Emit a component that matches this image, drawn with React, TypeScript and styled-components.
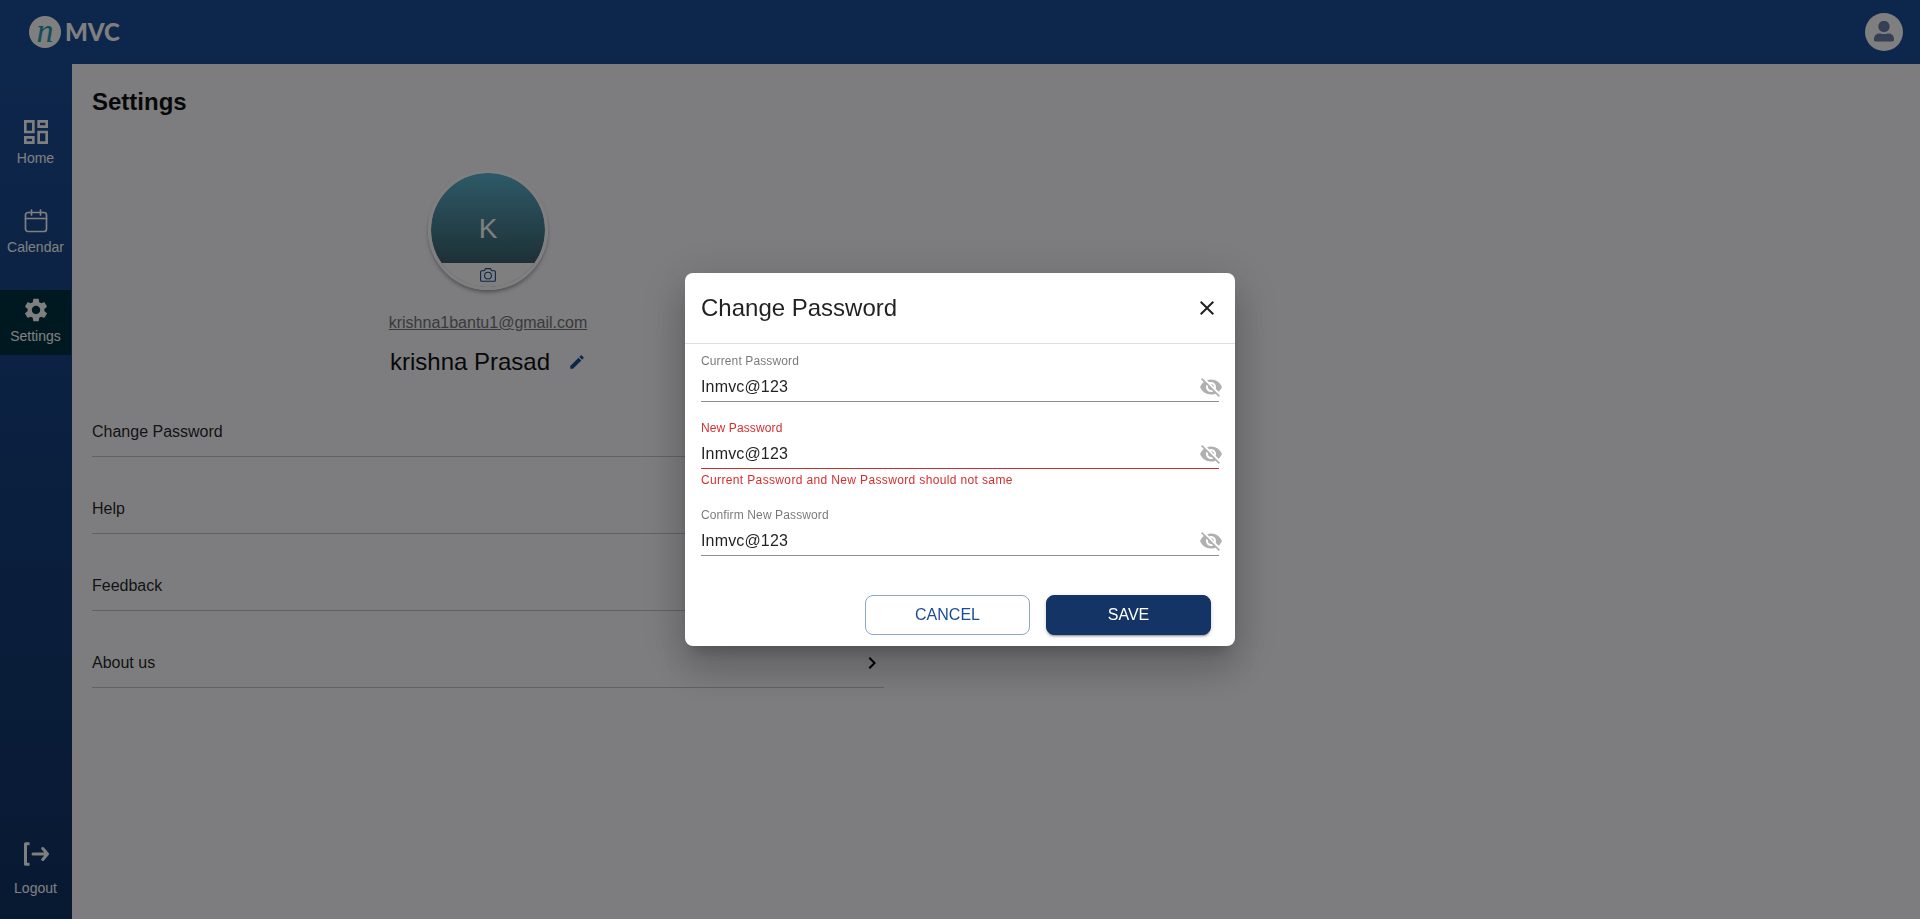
import React, { useState } from 'react';
import styled, { createGlobalStyle, css } from 'styled-components';
import {
  MdOutlineDashboard,
  MdSettings,
  MdEdit,
  MdChevronRight,
  MdClose,
  MdVisibilityOff,
} from 'react-icons/md';

const GlobalStyle = createGlobalStyle`
  *, *::before, *::after { box-sizing: border-box; }
  body {
    margin: 0;
    font-family: "Liberation Sans", Arial, sans-serif;
    font-size: 16px;
    line-height: 24px;
    color: rgba(0, 0, 0, 0.87);
    background: #fafafe;
  }
  h1, h2, p { margin: 0; }
  button, input { font: inherit; color: inherit; }
  svg { display: block; flex: none; }
`;

const Page = styled.div`
  display: flex;
  flex-direction: column;
  min-height: 100vh;
`;

const TopBar = styled.header`
  display: flex;
  align-items: center;
  justify-content: space-between;
  height: 64px;
  padding: 0 17px 0 29px;
  background: #1b4d97;
`;

const Logo = styled.a`
  display: flex;
  align-items: center;
  gap: 4px;
  color: #fff;
  text-decoration: none;
`;

const LogoMark = styled.span`
  display: flex;
  align-items: center;
  justify-content: center;
  width: 32px;
  height: 32px;
  padding-bottom: 2px;
  border-radius: 50%;
  background: #fff;
  color: #1f9db5;
  font: italic 34px/16px "Liberation Serif", "Times New Roman", serif;
`;

const LogoName = styled.span`
  font: 900 24px/32px Lato, sans-serif;
`;

const ProfileButton = styled.button`
  display: flex;
  align-items: center;
  justify-content: center;
  width: 38px;
  height: 38px;
  padding: 0;
  border: 0;
  border-radius: 50%;
  background: #fff;
  color: #6c80a8;
`;

const Body = styled.div`
  display: flex;
  flex: 1;
`;

const Sidebar = styled.nav`
  display: flex;
  flex-direction: column;
  gap: 24px;
  width: 72px;
  padding: 48px 0 16px;
  background: linear-gradient(#1b4d97, #103264);
`;

const NavItem = styled.a<{ $active?: boolean; $bottom?: boolean }>`
  display: flex;
  flex-direction: column;
  align-items: center;
  justify-content: space-between;
  width: 71px;
  height: 65px;
  padding: 4px 0 9px;
  font-size: 14px;
  line-height: 20px;
  color: #fff;
  text-decoration: none;
  background: ${(p) => (p.$active ? '#003340' : 'transparent')};
  ${(p) =>
    p.$bottom &&
    css`
      height: 66px;
      margin-top: auto;
      padding: 1px 0 5px;
    `}
`;

const NavIcon = styled.span`
  display: flex;
  align-items: center;
  justify-content: center;
  height: 32px;
`;

const Main = styled.main`
  display: grid;
  grid-template-columns: 11fr 14fr;
  align-content: start;
  flex: 1;
  padding: 20px 28px 20px 20px;
`;

const Panel = styled.section`
  display: flex;
  flex-direction: column;
`;

const PageTitle = styled.h1`
  font-size: 24px;
  line-height: 36px;
  color: #111;
`;

const Profile = styled.div`
  display: flex;
  flex-direction: column;
  align-items: center;
  padding-top: 50px;
`;

const Avatar = styled.div`
  display: flex;
  flex-direction: column;
  width: 120px;
  height: 120px;
  border: 3px solid #fff;
  border-radius: 50%;
  overflow: hidden;
  background: linear-gradient(#5cb4d0, #3a606c 80%) padding-box;
  box-shadow: 0 3px 4px -1px rgba(0, 0, 0, 0.4);
`;

const Initial = styled.div`
  display: flex;
  align-items: flex-end;
  justify-content: center;
  height: 90px;
  padding-bottom: 16px;
  font-size: 28px;
  line-height: 36px;
  color: #fff;
`;

const PhotoButton = styled.button`
  display: flex;
  align-items: flex-start;
  justify-content: center;
  flex: 1;
  padding: 4px 0 0;
  border: 0;
  background: #fff;
  color: #1b4d97;
`;

const Email = styled.a`
  margin-top: 21px;
  color: #757577;
`;

const NameRow = styled.div`
  display: flex;
  align-items: center;
  gap: 18px;
  margin-top: 9px;
  font-size: 24px;
  line-height: 36px;
  color: #111;
`;

const PlainButton = styled.button`
  display: flex;
  padding: 0;
  border: 0;
  background: none;
`;

const EditButton = styled(PlainButton)`
  color: #1b4d97;
`;

const Links = styled.div`
  display: flex;
  flex-direction: column;
`;

const LinkRow = styled.button`
  display: flex;
  align-items: flex-end;
  justify-content: space-between;
  height: 77px;
  padding: 0 0 12px;
  border: 0;
  border-bottom: 1px solid #c4c4c6;
  background: none;
  text-align: left;

  svg { color: #000; }
`;

const Backdrop = styled.div`
  position: fixed;
  inset: 0;
  display: flex;
  align-items: center;
  justify-content: center;
  background: rgba(0, 0, 0, 0.5);
`;

const Dialog = styled.form`
  width: 550px;
  max-width: calc(100% - 64px);
  border-radius: 8px;
  background: #fff;
  box-shadow:
    0 11px 15px -7px rgba(0, 0, 0, 0.2),
    0 24px 38px 3px rgba(0, 0, 0, 0.14),
    0 9px 46px 8px rgba(0, 0, 0, 0.12);
`;

const DialogHeader = styled.header`
  display: flex;
  align-items: center;
  justify-content: space-between;
  height: 71px;
  padding: 0 16px;
  border-bottom: 1px solid #dfdfdf;
`;

const DialogTitle = styled.h2`
  font-size: 24px;
  line-height: 32px;
  font-weight: 400;
`;

const Fields = styled.div`
  display: flex;
  flex-direction: column;
  gap: 17px;
  padding: 8px 16px 39px;
`;

const FieldBox = styled.div`
  display: flex;
  flex-direction: column;
`;

const FieldLabel = styled.label<{ $error?: boolean }>`
  font-size: 12px;
  line-height: 18px;
  letter-spacing: 0.01em;
  color: ${(p) => (p.$error ? '#d32f2f' : 'rgba(0, 0, 0, 0.54)')};
`;

const InputRow = styled.div<{ $error?: boolean }>`
  display: flex;
  align-items: center;
  height: 32px;
  padding-top: 2px;
  border-bottom: 1px solid ${(p) => (p.$error ? '#d32f2f' : '#8c8c8c')};
`;

const TextInput = styled.input`
  flex: 1;
  min-width: 0;
  height: 24px;
  padding: 0;
  border: 0;
  outline: 0;
  background: none;
  letter-spacing: 0.01em;
`;

const EyeButton = styled(PlainButton)`
  margin-right: -4px;
  color: #b0b0b0;
`;

const ErrorText = styled.p`
  margin-top: 2px;
  font-size: 12px;
  line-height: 18px;
  letter-spacing: 0.03em;
  color: #d32f2f;
`;

const Actions = styled.div`
  display: flex;
  justify-content: flex-end;
  gap: 16px;
  padding: 0 24px 11px;
`;

const ActionButton = styled.button<{ $primary?: boolean }>`
  width: 165px;
  height: 40px;
  padding: 0;
  border: 1px solid ${(p) => (p.$primary ? '#133464' : '#8da6cb')};
  border-radius: 8px;
  color: ${(p) => (p.$primary ? '#fff' : '#1b4d97')};
  background: ${(p) => (p.$primary ? '#133464' : '#fff')};
  box-shadow: ${(p) =>
    p.$primary
      ? '0 3px 1px -2px rgba(0,0,0,.2), 0 2px 2px rgba(0,0,0,.14), 0 1px 5px rgba(0,0,0,.12)'
      : 'none'};
`;

const CalendarIcon = () => (
  <svg width="24" height="24" viewBox="0 0 24 24" fill="none" stroke="currentColor" strokeWidth="1.7" strokeLinecap="round">
    <rect x="1.500" y="3.500" width="21" height="19" rx="2.500" />
    <path d="M1.500 9.500h21M7.500 1v5M16.500 1v5" />
  </svg>
);

const LogoutIcon = () => (
  <svg width="26" height="24" viewBox="0 0 26 24" fill="none" stroke="currentColor" strokeWidth="3">
    <path d="M6.500 1.700H2.500v20.600h4" strokeLinejoin="round" />
    <path d="M10 12h14M19.800 6.500l4.700 5.500-4.700 5.500" strokeLinecap="round" strokeLinejoin="round" />
  </svg>
);

const CameraIcon = () => (
  <svg width="16" height="16" viewBox="0 0 16 16" fill="none" stroke="currentColor" strokeWidth="1.100">
    <path d="M1.600 3.800h2.600L5.600 1.600h4.800l1.400 2.200h2.600a1 1 0 0 1 1 1v8.400a1 1 0 0 1-1 1H1.600a1 1 0 0 1-1-1V4.800a1 1 0 0 1 1-1z" />
    <circle cx="8" cy="8.600" r="3.400" />
  </svg>
);

const PersonIcon = () => (
  <svg width="22" height="22" viewBox="0 0 22 22" fill="currentColor">
    <circle cx="11" cy="5.500" r="5.700" />
    <path d="M1 18.100c0-3.400 2.200-5.600 5.200-5.600 1.400 0 2.600.6 4.800.6s3.400-.6 4.800-.6c3 0 5.200 2.200 5.200 5.600v1c0 .8-.6 1.400-1.400 1.400H2.400c-.8 0-1.400-.6-1.400-1.400z" />
  </svg>
);

interface FieldProps {
  id: string;
  label: string;
  value: string;
  error?: string;
  onChange: (value: string) => void;
}

const PasswordField = ({ id, label, value, error, onChange }: FieldProps) => (
  <FieldBox>
    <FieldLabel htmlFor={id} $error={!!error}>{label}</FieldLabel>
    <InputRow $error={!!error}>
      <TextInput
        id={id}
        type="text"
        value={value}
        aria-invalid={!!error}
        onChange={(e) => onChange(e.target.value)}
      />
      <EyeButton type="button" aria-label={`Hide ${label}`}>
        <MdVisibilityOff size={24} />
      </EyeButton>
    </InputRow>
    {error && <ErrorText role="alert">{error}</ErrorText>}
  </FieldBox>
);

const links = ['Change Password', 'Help', 'Feedback', 'About us'];

export default function App() {
  const [current, setCurrent] = useState('Inmvc@123');
  const [next, setNext] = useState('Inmvc@123');
  const [confirm, setConfirm] = useState('Inmvc@123');
  const error = current === next ? 'Current Password and New Password should not same' : undefined;

  return (
    <>
      <GlobalStyle />
      <Page>
        <TopBar>
          <Logo href="#">
            <LogoMark>n</LogoMark>
            <LogoName>MVC</LogoName>
          </Logo>
          <ProfileButton type="button" aria-label="Profile"><PersonIcon /></ProfileButton>
        </TopBar>
        <Body>
          <Sidebar>
            <NavItem href="#home"><NavIcon><MdOutlineDashboard size={32} /></NavIcon>Home</NavItem>
            <NavItem href="#calendar"><NavIcon><CalendarIcon /></NavIcon>Calendar</NavItem>
            <NavItem href="#settings" $active><NavIcon><MdSettings size={28} /></NavIcon>Settings</NavItem>
            <NavItem href="#logout" $bottom><NavIcon><LogoutIcon /></NavIcon>Logout</NavItem>
          </Sidebar>
          <Main>
            <Panel>
              <PageTitle>Settings</PageTitle>
              <Profile>
                <Avatar>
                  <Initial>K</Initial>
                  <PhotoButton type="button" aria-label="Change photo"><CameraIcon /></PhotoButton>
                </Avatar>
                <Email href="#email">krishna1bantu1@gmail.com</Email>
                <NameRow>
                  krishna Prasad
                  <EditButton type="button" aria-label="Edit name"><MdEdit size={18} /></EditButton>
                </NameRow>
              </Profile>
              <Links>
                {links.map((text) => (
                  <LinkRow key={text} type="button">
                    {text}
                    <MdChevronRight size={24} />
                  </LinkRow>
                ))}
              </Links>
            </Panel>
          </Main>
        </Body>
      </Page>
      <Backdrop>
        <Dialog role="dialog" aria-modal="true" aria-labelledby="dialog-title" onSubmit={(e) => e.preventDefault()}>
          <DialogHeader>
            <DialogTitle id="dialog-title">Change Password</DialogTitle>
            <PlainButton type="button" aria-label="Close"><MdClose size={24} /></PlainButton>
          </DialogHeader>
          <Fields>
            <PasswordField id="current" label="Current Password" value={current} onChange={setCurrent} />
            <PasswordField id="new" label="New Password" value={next} error={error} onChange={setNext} />
            <PasswordField id="confirm" label="Confirm New Password" value={confirm} onChange={setConfirm} />
          </Fields>
          <Actions>
            <ActionButton type="button">CANCEL</ActionButton>
            <ActionButton type="submit" $primary>SAVE</ActionButton>
          </Actions>
        </Dialog>
      </Backdrop>
    </>
  );
}
